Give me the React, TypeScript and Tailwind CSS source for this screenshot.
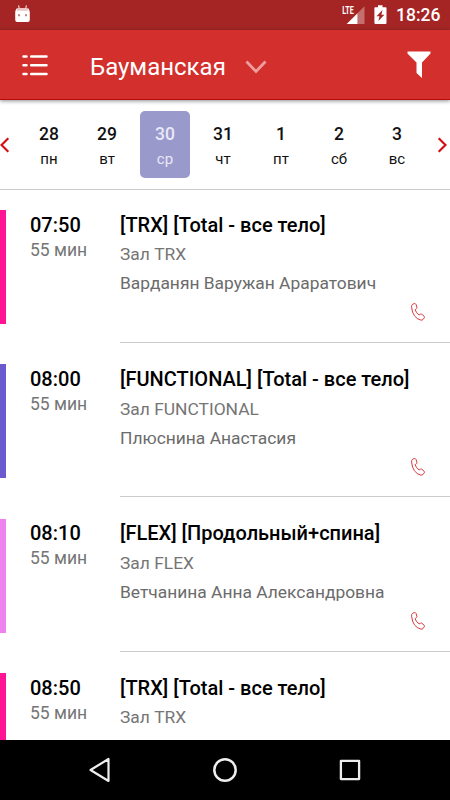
import clsx from 'clsx';

type Lesson = {
  time: string;
  title: string;
  room: string;
  coach?: string;
  color: string;
};

const days = [
  { num: '28', name: 'пн' },
  { num: '29', name: 'вт' },
  { num: '30', name: 'ср' },
  { num: '31', name: 'чт' },
  { num: '1', name: 'пт' },
  { num: '2', name: 'сб' },
  { num: '3', name: 'вс' },
];

const lessons: Lesson[] = [
  { time: '07:50', title: '[TRX] [Total - все тело]', room: 'Зал TRX', coach: 'Варданян Варужан Араратович', color: 'bg-[#ff1493]' },
  { time: '08:00', title: '[FUNCTIONAL] [Total - все тело]', room: 'Зал FUNCTIONAL', coach: 'Плюснина Анастасия', color: 'bg-[#6a5acd]' },
  { time: '08:10', title: '[FLEX] [Продольный+спина]', room: 'Зал FLEX', coach: 'Ветчанина Анна Александровна', color: 'bg-[#ee82ee]' },
  { time: '08:50', title: '[TRX] [Total - все тело]', room: 'Зал TRX', color: 'bg-[#ff1493]' },
];

function StatusBar() {
  return (
    <div className="flex h-[30px] shrink-0 items-center bg-[#a52525] pl-[15px] pr-[10px] text-white">
      <svg width="16" height="18" viewBox="0 0 16 18" className="mb-[2px]">
        <path d="M4.300 4 3.600.3M10.700 4l.7-3.700" stroke="#f0d0d0" strokeWidth="1.200" />
        <path d="M1.500 3.500h12q1.300 2 1.300 4.500v7q0 2-2 2H2.200q-2 0-2-2V8q0-2.500 1.300-4.500z" fill="#fff" />
        <path d="M3 3h9l1.500 2.800h-12z" fill="#edc4c4" />
        <path d="M3 9.200h2v2H3zM10 9.200h2v2h-2z" fill="#c98080" />
      </svg>
      <svg width="24" height="28" viewBox="0 -4 24 28" className="ml-auto">
        <path d="M22.500 1.200v17.800h-7V8.200z" fill="#c56e6e" />
        <path d="M15.500 8.200V19H4.700z" fill="#fff" />
        <text x="0.200" y="9.300" fill="#fff" fontSize="11" fontWeight="700" textLength="11.500" lengthAdjust="spacingAndGlyphs">
          LTE
        </text>
      </svg>
      <svg width="13" height="20" viewBox="0 0 13 20" className="ml-[8px]">
        <path d="M4 .3h4.500v2h3.200q.8 0 .8.8v15q0 .8-.8.8H1.200q-.8 0-.8-.8v-15q0-.8.8-.8H4z" fill="#fff" />
        <path d="M8.500 5 2.500 11.200h3L4.400 16l6-6.200h-3z" fill="#a52525" />
      </svg>
      <span className="ml-[9px] w-[44px] whitespace-nowrap text-[17.500px] font-medium leading-[30px]">18:26</span>
    </div>
  );
}

function Toolbar() {
  return (
    <header className="relative z-10 flex h-[70px] shrink-0 items-center border-b border-[#b80c0c] bg-[#d22f2d] pl-[22px] pr-[18px] shadow-[0_1px_4px_rgba(0,0,0,0.45)]">
      <svg width="26" height="22" viewBox="0 0 26 22" fill="none" stroke="#fff" strokeWidth="2.500" strokeLinecap="round">
        <path d="M1.500 2.500h3M9.200 2.500h15.300M1.500 11.200h3M9.200 11.200h15.300M1.500 20h3M9.200 20h15.300" />
      </svg>
      <h1 className="ml-[42px] mt-[4px] w-[136px] whitespace-nowrap text-[24px] leading-[30px] text-white">Бауманская</h1>
      <svg width="22" height="14" viewBox="0 0 22 14" fill="none" stroke="#eb9f9e" strokeWidth="2.800" className="ml-[19px] mt-[5px]">
        <path d="m1.500 1.500 9.500 10 9.500-10" />
      </svg>
      <svg width="24" height="27" viewBox="0 0 24 27" fill="#fff" className="ml-auto mr-px">
        <path d="M.5.500h23v2L15 11.500V27l-5.500-5V11.500L.5 2.500z" />
      </svg>
    </header>
  );
}

function WeekStrip() {
  return (
    <nav className="flex h-[90px] shrink-0 items-center border-b border-[#ccc]">
      <svg width="10" height="16" viewBox="0 0 10 16" fill="none" stroke="#d40f14" strokeWidth="2.200">
        <path d="M8.300 1.300 1.500 8l6.800 6.700" />
      </svg>
      <ul className="ml-[14px] flex gap-2">
        {days.map((d) => (
          <li
            key={d.num}
            className={clsx(
              'flex h-[67px] w-[50px] flex-col items-center rounded-[5px] pt-[11px]',
              d.num === '30' ? 'bg-[#9a99cc] text-[#e9e8f6]' : 'text-[#111]',
            )}
          >
            <span className="text-[17.500px] font-medium leading-6">{d.num}</span>
            <span className="text-[15px] leading-[26px]">{d.name}</span>
          </li>
        ))}
      </ul>
      <svg width="10" height="16" viewBox="0 0 10 16" fill="none" stroke="#d40f14" strokeWidth="2.200" className="ml-auto mr-[3px]">
        <path d="M1.700 1.300 8.500 8l-6.800 6.700" />
      </svg>
    </nav>
  );
}

function PhoneIcon() {
  return (
    <svg width="14" height="18" viewBox="0 0 14 18" fill="none" stroke="#d9383a" strokeWidth="1" strokeLinejoin="round">
      <path d="M1.700 1.200 3.300.6q1.200-.3 1.700.8l.9 3q.2 1-.7 1.500l-1 .7q.5 3.100 3.900 5.300l1.200-.7q.9-.5 1.600.1l2.200 1.900q.7.7.2 1.500l-1.200 1.700q-.8.9-2.300.7Q1.700 15 .6 4.200.4 2 1.700 1.200z" />
    </svg>
  );
}

function LessonRow({ lesson }: { lesson: Lesson }) {
  return (
    <li className="flex h-[154.330px] shrink-0 items-start">
      <div className={clsx('mt-5 h-[114px] w-[6px]', lesson.color)} />
      <div className="ml-6 w-[90px] pt-[20.600px]">
        <p className="text-[20px] font-medium leading-[28px] text-black">{lesson.time}</p>
        <p className="text-[17.500px] leading-[22px] text-[#757575]">55 мин</p>
      </div>
      <div className="flex h-[153px] flex-1 flex-col whitespace-nowrap border-b border-[#ccc] pt-[20.600px]">
        <p className="text-[20px] font-medium leading-[28px] text-black">{lesson.title}</p>
        <p className="mt-[1.800px] text-[17.400px] leading-[29px] text-[#757575]">{lesson.room}</p>
        {lesson.coach && (
          <>
            <p className="text-[17.400px] leading-[29px] text-[#6b6b6b]">{lesson.coach}</p>
            <div className="mr-[25px] mt-[5px] self-end">
              <PhoneIcon />
            </div>
          </>
        )}
      </div>
    </li>
  );
}

function NavBar() {
  return (
    <footer className="flex h-[60px] shrink-0 items-center justify-center gap-[101px] bg-black pr-[2px]">
      <svg width="24" height="26" viewBox="0 0 24 26" fill="none" stroke="#eee" strokeWidth="2.200" strokeLinejoin="round">
        <path d="M21.500 2v22L3.500 13z" />
      </svg>
      <svg width="26" height="26" viewBox="0 0 26 26" fill="none" stroke="#eee" strokeWidth="2.500">
        <circle cx="13" cy="13" r="10.700" />
      </svg>
      <svg width="22" height="22" viewBox="0 0 22 22" fill="none" stroke="#eee" strokeWidth="2.300" strokeLinejoin="round">
        <path d="M1.900 1.900h18.200v18.200H1.900z" />
      </svg>
    </footer>
  );
}

export default function App() {
  return (
    <div className="flex h-[800px] w-[450px] flex-col overflow-hidden bg-white font-[Roboto,sans-serif]">
      <StatusBar />
      <Toolbar />
      <WeekStrip />
      <ul className="flex min-h-0 flex-1 flex-col overflow-hidden">
        {lessons.map((lesson) => (
          <LessonRow key={lesson.time} lesson={lesson} />
        ))}
      </ul>
      <NavBar />
    </div>
  );
}
